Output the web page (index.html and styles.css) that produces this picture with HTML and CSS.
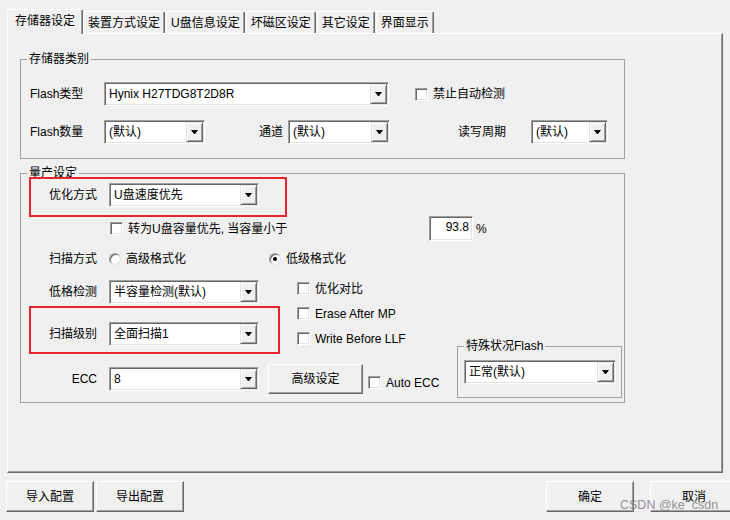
FILE: index.html
```html
<!DOCTYPE html>
<html lang="zh-CN">
<head>
<meta charset="utf-8">
<title>量产设定</title>
<link rel="stylesheet" href="styles.css">
</head>
<body>
<div class="dialog">
  <div class="tabs">
    <div class="tab active">存储器设定</div>
    <div class="tab">装置方式设定</div>
    <div class="tab">U盘信息设定</div>
    <div class="tab">坏磁区设定</div>
    <div class="tab">其它设定</div>
    <div class="tab">界面显示</div>
  </div>

  <div class="panel">
    <fieldset class="group g1">
      <legend>存储器类别</legend>
      <div class="row r1">
        <span class="lbl lbl-flash">Flash类型</span>
        <div class="combo combo-type"><span class="val">Hynix H27TDG8T2D8R</span><span class="arrow"></span></div>
        <span class="opt opt-auto-detect"><span class="cb"></span><span class="ctext">禁止自动检测</span></span>
      </div>
      <div class="row r2">
        <span class="lbl lbl-flash">Flash数量</span>
        <div class="combo combo-count"><span class="val">(默认)</span><span class="arrow"></span></div>
        <span class="lbl lbl-channel">通道</span>
        <div class="combo combo-channel"><span class="val">(默认)</span><span class="arrow"></span></div>
        <span class="lbl lbl-cycle">读写周期</span>
        <div class="combo combo-cycle"><span class="val">(默认)</span><span class="arrow"></span></div>
      </div>
    </fieldset>

    <fieldset class="group g2">
      <legend>量产设定</legend>
      <div class="row rA">
        <span class="redbox rb1"></span>
        <span class="lbl-r">优化方式</span>
        <div class="combo combo-std"><span class="val">U盘速度优先</span><span class="arrow"></span></div>
      </div>
      <div class="row rB">
        <span class="opt opt-capacity"><span class="cb"></span><span class="ctext">转为U盘容量优先, 当容量小于</span></span>
        <span class="field">93.8</span>
        <span class="pct">%</span>
      </div>
      <div class="row rC">
        <span class="lbl-r">扫描方式</span>
        <span class="opt opt-high"><span class="radio"></span><span class="ctext">高级格式化</span></span>
        <span class="opt"><span class="radio on"></span><span class="ctext">低级格式化</span></span>
      </div>
      <div class="split">
        <div class="left-col">
          <div class="row rD">
            <span class="lbl-r">低格检测</span>
            <div class="combo combo-std"><span class="val">半容量检测(默认)</span><span class="arrow"></span></div>
          </div>
          <div class="row rE">
            <span class="redbox rb2"></span>
            <span class="lbl-r">扫描级别</span>
            <div class="combo combo-std"><span class="val">全面扫描1</span><span class="arrow"></span></div>
          </div>
        </div>
        <div class="checks">
          <span class="opt check-row"><span class="cb"></span><span class="ctext">优化对比</span></span>
          <span class="opt check-row"><span class="cb"></span><span class="ctext">Erase After MP</span></span>
          <span class="opt check-row"><span class="cb"></span><span class="ctext">Write Before LLF</span></span>
        </div>
      </div>
      <div class="row rF">
        <div class="row ecc">
          <span class="lbl-r">ECC</span>
          <div class="combo combo-std"><span class="val">8</span><span class="arrow"></span></div>
        </div>
        <div class="btn btn-adv">高级设定</div>
        <span class="opt opt-auto-ecc"><span class="cb"></span><span class="ctext">Auto ECC</span></span>
        <fieldset class="group g3">
          <legend>特殊状况Flash</legend>
          <div class="combo combo-special"><span class="val">正常(默认)</span><span class="arrow"></span></div>
        </fieldset>
      </div>
    </fieldset>
  </div>

  <div class="footer">
    <div class="btn btn-foot">导入配置</div>
    <div class="btn btn-foot btn-export">导出配置</div>
    <div class="btn btn-foot btn-ok">确定</div>
    <div class="btn btn-foot btn-cancel">取消</div>
  </div>

  <div class="watermark">CSDN @ke_csdn</div>
</div>
</body>
</html>
```

FILE: styles.css
```css
* { box-sizing: border-box; }

html, body {
  margin: 0;
  padding: 0;
}

body {
  width: 730px;
  height: 520px;
  overflow: hidden;
  background: #f0f0f0;
  color: #000;
  font-family: "Liberation Sans", "Noto Sans CJK SC", sans-serif;
  font-size: 12px;
  line-height: 16px;
}

.dialog {
  position: relative;
  width: 730px;
  height: 520px;
  overflow: hidden;
  background: #f0f0f0;
}

/* ---------- tabs ---------- */
.tabs {
  display: flex;
  align-items: flex-start;
  height: 33px;
  padding: 9px 0 0 7px;
  position: relative;
  z-index: 2;
}

.tab {
  flex: none;
  height: 22px;
  margin-top: 2px;
  margin-left: 1px;
  padding: 4px 4px 0;
  line-height: 14px;
  white-space: nowrap;
  background: #f0f0f0;
  border-top: 1px solid #fff;
  border-left: 1px solid #fff;
  border-right: 1px solid #696969;
  border-radius: 2px 2px 0 0;
  box-shadow: inset -1px 0 0 #a0a0a0;
}

.tab.active {
  height: 25px;
  margin-top: 0;
  margin-left: 0;
  padding: 4px 7px 0;
}

.tab.active + .tab { margin-left: 0; }

/* ---------- main panel ---------- */
.panel {
  margin-left: 7px;
  width: 716px;
  height: 440px;
  padding-left: 12px;
  border: 1px solid;
  border-color: #fff #696969 #696969 #fff;
  box-shadow: inset -1px -1px 0 #a0a0a0;
  position: relative;
  z-index: 1;
}

/* ---------- group boxes ---------- */
.group {
  margin: 0;
  padding: 0;
  min-width: 0;
  border: 1px solid #a0a0a0;
}

.group > legend {
  margin-left: 6px;
  padding: 0 2px;
  line-height: 16px;
}

.g1 {
  width: 605px;
  margin-top: 17px;
  padding-bottom: 14px;
}

.g2 {
  width: 605px;
  margin-top: 6px;
  padding-bottom: 4px;
}

.g3 {
  flex: none;
  width: 165px;
  margin: -26px 2px 0 auto;
  padding-bottom: 13px;
}

/* ---------- rows ---------- */
.row {
  display: flex;
  align-items: center;
}

.g1 .row {
  height: 24px;
  padding-left: 9px;
}

.g1 .r1 { margin-top: 15px; }
.g1 .r2 { margin-top: 14px; }

.lbl {
  flex: none;
  white-space: nowrap;
}

.lbl-flash { width: 74px; }
.lbl-channel { width: 29px; margin-left: 54px; }
.lbl-cycle { width: 73px; margin-left: 68px; }

.lbl-r {
  flex: none;
  width: 88px;
  padding-right: 12px;
  text-align: right;
  white-space: nowrap;
}

.rA {
  position: relative;
  height: 24px;
  margin-top: 2px;
}

.rB {
  height: 25px;
  margin-top: 9px;
  padding-left: 89px;
}

.rC {
  height: 16px;
  margin-top: 10px;
}

.split {
  display: flex;
  margin-top: 13px;
}

.left-col {
  flex: none;
  width: 238px;
}

.rD { height: 24px; }

.rE {
  position: relative;
  height: 24px;
  margin-top: 18px;
}

.checks {
  display: flex;
  flex-direction: column;
  gap: 12px;
  margin-left: 38px;
  padding-top: 2px;
}

.check-row { height: 13px; }

.rF {
  align-items: flex-start;
  margin-top: 18px;
}

.ecc {
  flex: none;
  height: 24px;
  margin-top: 3px;
}

/* ---------- combo boxes ---------- */
.combo {
  flex: none;
  display: flex;
  height: 24px;
  padding: 1px;
  background: #fff;
  border: 1px solid;
  border-color: #a0a0a0 #fff #fff #a0a0a0;
  box-shadow: inset 1px 1px 0 #696969, inset -1px -1px 0 #e3e3e3;
}

.combo .val {
  flex: 1;
  min-width: 0;
  padding-left: 3px;
  line-height: 20px;
  white-space: nowrap;
  overflow: hidden;
}

.combo .arrow {
  flex: none;
  width: 17px;
  height: 20px;
  display: flex;
  align-items: center;
  justify-content: center;
  background: #f0f0f0;
  border: 1px solid;
  border-color: #e3e3e3 #696969 #696969 #e3e3e3;
  box-shadow: inset 1px 1px 0 #fff, inset -1px -1px 0 #a0a0a0;
}

.combo .arrow::after {
  content: "";
  width: 1px;
  height: 0;
  border-top: 4px solid #000;
  border-left: 3px solid transparent;
  border-right: 3px solid transparent;
}

.combo-type { width: 285px; }
.combo-count { width: 101px; }
.combo-channel { width: 102px; }
.combo-cycle { width: 77px; }
.combo-std { width: 150px; }
.combo-special {
  width: 152px;
  margin: 6px 0 0 6px;
}

/* ---------- checkboxes & radios ---------- */
.opt {
  flex: none;
  display: flex;
  align-items: center;
  white-space: nowrap;
}

.cb {
  flex: none;
  width: 13px;
  height: 13px;
  background: #fff;
  border: 1px solid;
  border-color: #a0a0a0 #fff #fff #a0a0a0;
  box-shadow: inset 1px 1px 0 #696969, inset -1px -1px 0 #e3e3e3;
}

.radio {
  flex: none;
  position: relative;
  width: 12px;
  height: 12px;
  border-radius: 50%;
  background: #fff;
  border: 1px solid;
  border-color: #a0a0a0 #e3e3e3 #e3e3e3 #a0a0a0;
  box-shadow: inset 1px 1px 0 #696969;
}

.radio.on::after {
  content: "";
  position: absolute;
  left: 3px;
  top: 3px;
  width: 4px;
  height: 4px;
  border-radius: 50%;
  background: #000;
}

.ctext { margin-left: 5px; }

.opt-auto-detect { margin-left: 26px; }
.opt-capacity { width: 319px; }
.opt-high { width: 160px; }

.opt-auto-ecc {
  height: 13px;
  margin-left: 5px;
  margin-top: 12px;
}

/* ---------- edit field ---------- */
.field {
  flex: none;
  width: 44px;
  height: 25px;
  padding-right: 3px;
  line-height: 21px;
  text-align: right;
  background: #fff;
  border: 1px solid;
  border-color: #a0a0a0 #fff #fff #a0a0a0;
  box-shadow: inset 1px 1px 0 #696969, inset -1px -1px 0 #e3e3e3;
}

.pct { margin-left: 3px; }

/* ---------- buttons ---------- */
.btn {
  flex: none;
  display: flex;
  align-items: center;
  justify-content: center;
  background: #f0f0f0;
  border: 1px solid;
  border-color: #fff #696969 #696969 #fff;
  box-shadow: inset -1px -1px 0 #a0a0a0;
  white-space: nowrap;
}

.btn-adv {
  width: 95px;
  height: 30px;
  margin-left: 9px;
}

.footer {
  display: flex;
  margin-top: 8px;
  padding-left: 6px;
}

.btn-foot {
  width: 88px;
  height: 31px;
}

.btn-export { margin-left: 2px; }
.btn-ok { margin-left: 362px; }
.btn-cancel { margin-left: 16px; }

/* ---------- annotation overlays ---------- */
.redbox {
  position: absolute;
  border: 2px solid #e5262c;
  pointer-events: none;
}

.rb1 {
  left: 8px;
  top: -6px;
  width: 258px;
  height: 40px;
}

.rb2 {
  left: 8px;
  top: -16px;
  width: 251px;
  height: 48px;
}

.watermark {
  position: absolute;
  left: 620px;
  top: 497px;
  font-family: "Liberation Sans", sans-serif;
  font-size: 12.5px;
  line-height: 16px;
  color: rgba(120, 120, 120, 0.8);
  white-space: nowrap;
  z-index: 5;
}
```
